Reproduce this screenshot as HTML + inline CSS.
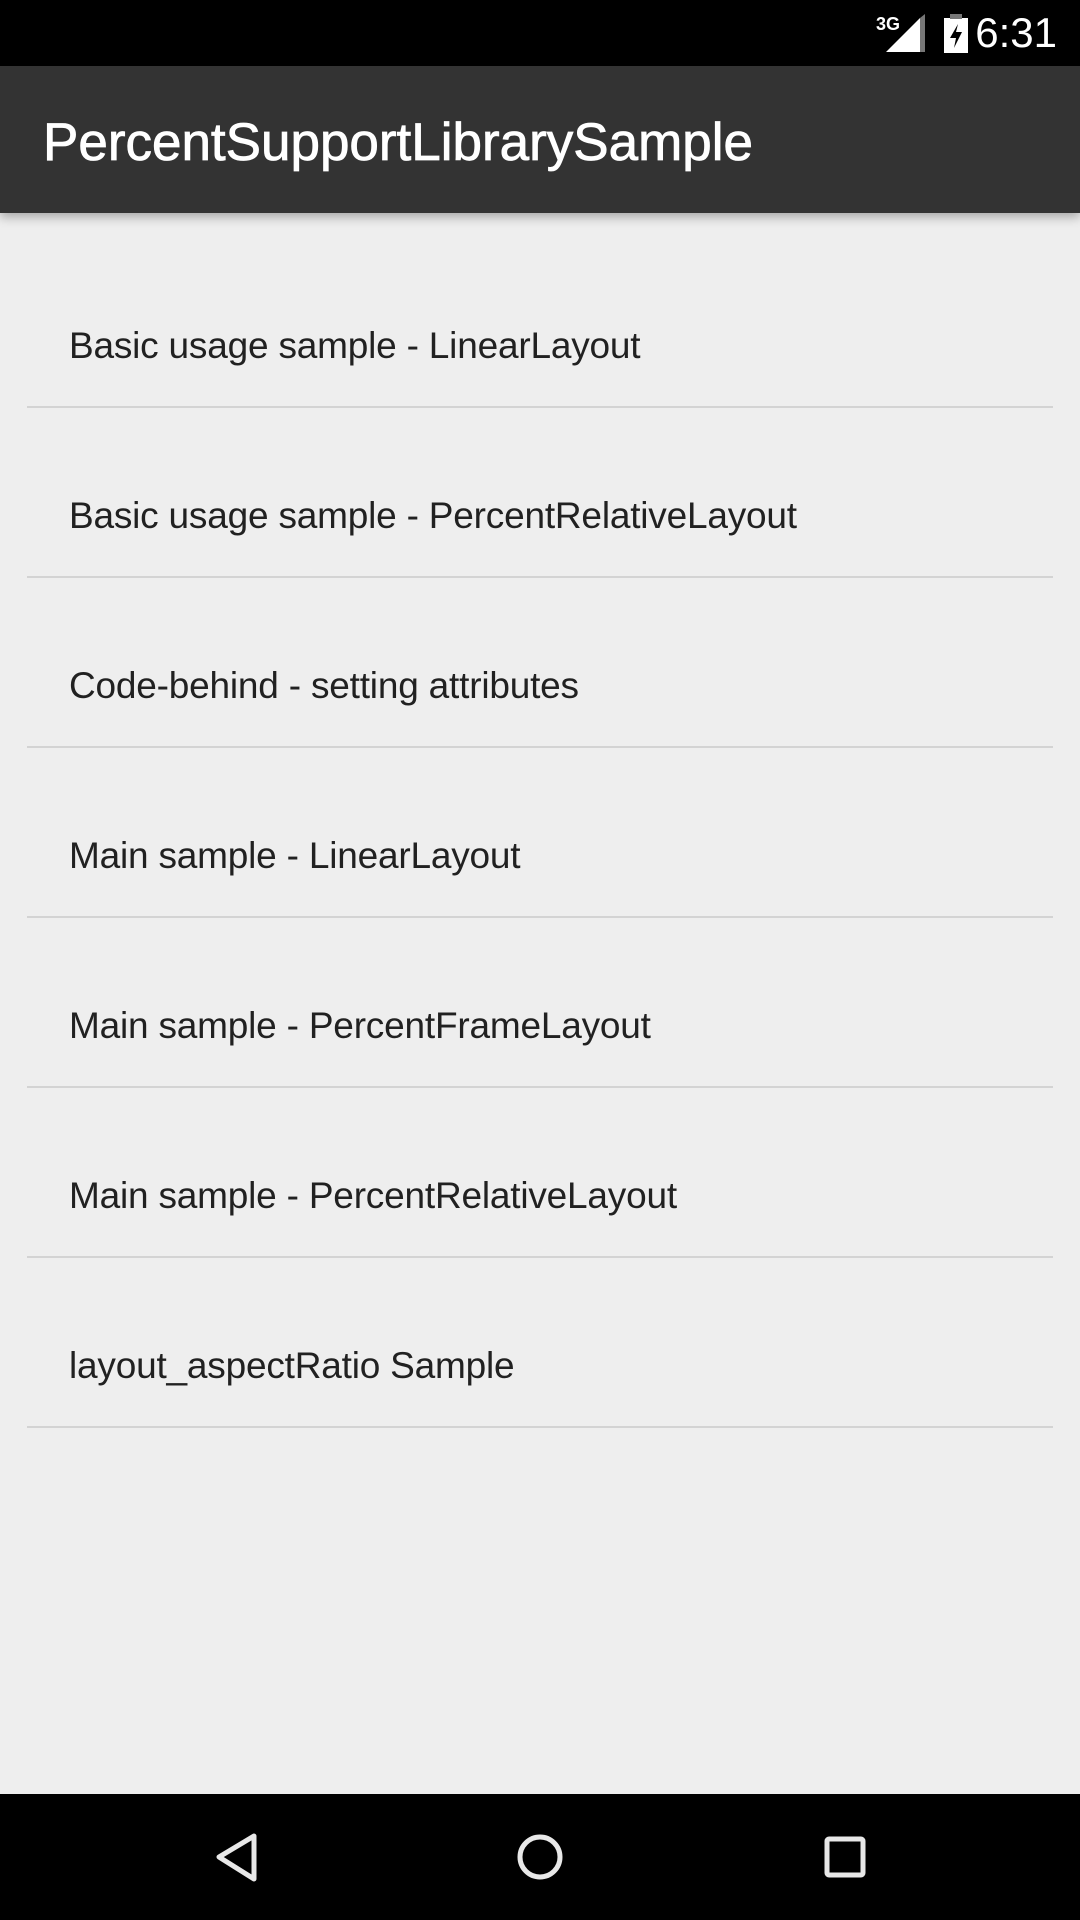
<!DOCTYPE html>
<html><head><meta charset="utf-8"><style>
html,body{margin:0;padding:0}
body{width:1080px;height:1920px;background:#eeeeee;position:relative;overflow:hidden;font-family:"Liberation Sans",Roboto,sans-serif}
.status{position:absolute;left:0;top:0;width:1080px;height:66px;background:#000}
.appbar{position:absolute;left:0;top:66px;width:1080px;height:147px;background:#333333;box-shadow:0 4px 10px rgba(0,0,0,0.3)}
.title{position:absolute;left:43px;top:50px;color:#fff;font-size:53px;letter-spacing:0px;line-height:54px;white-space:nowrap;-webkit-text-stroke:0.8px #fff}
.item{position:absolute;left:0;width:1080px;height:170px}
.item span{position:absolute;left:69px;top:89px;font-size:37px;line-height:37px;color:#212121;white-space:nowrap;letter-spacing:-0.2px}
.item i{position:absolute;left:27px;width:1026px;bottom:0;height:2px;background:#d3d3d3}
.nav{position:absolute;left:0;top:1794px;width:1080px;height:126px;background:#000}
</style></head><body>
<div class="status">
<svg width="1080" height="66" style="position:absolute;left:0;top:0">
<text x="876" y="30" font-family="Liberation Sans" font-size="18" font-weight="bold" fill="#fff">3G</text>
<polygon points="886,52 920,18 920,52" fill="#fff"/>
<polygon points="920,18 920,52 925,52 925,14" fill="#777"/>
<rect x="944" y="18" width="24" height="35" fill="#fff"/>
<rect x="950" y="14" width="12" height="5" fill="#777"/>
<polygon points="958,24 950,38 956,38 954,48 962,32 956,32" fill="#000"/>
<text x="1057" y="47" text-anchor="end" font-family="Liberation Sans" font-size="42" fill="#fff">6:31</text>
</svg>
</div>
<div class="appbar"><div class="title">PercentSupportLibrarySample</div></div>

<div class="item" style="top:238px"><span>Basic usage sample - LinearLayout</span><i></i></div>
<div class="item" style="top:408px"><span>Basic usage sample - PercentRelativeLayout</span><i></i></div>
<div class="item" style="top:578px"><span>Code-behind - setting attributes</span><i></i></div>
<div class="item" style="top:748px"><span>Main sample - LinearLayout</span><i></i></div>
<div class="item" style="top:918px"><span>Main sample - PercentFrameLayout</span><i></i></div>
<div class="item" style="top:1088px"><span>Main sample - PercentRelativeLayout</span><i></i></div>
<div class="item" style="top:1258px"><span>layout_aspectRatio Sample</span><i></i></div>

<div class="nav">
<svg width="1080" height="126" style="position:absolute;left:0;top:0">
<polygon points="254,42 254,85 219,63" fill="none" stroke="#e8e8e8" stroke-width="5" stroke-linejoin="round"/>
<circle cx="540" cy="63" r="20" fill="none" stroke="#e8e8e8" stroke-width="5"/>
<rect x="827" y="45" width="36" height="36" rx="2" fill="none" stroke="#e8e8e8" stroke-width="5"/>
</svg>
</div>
</body></html>
